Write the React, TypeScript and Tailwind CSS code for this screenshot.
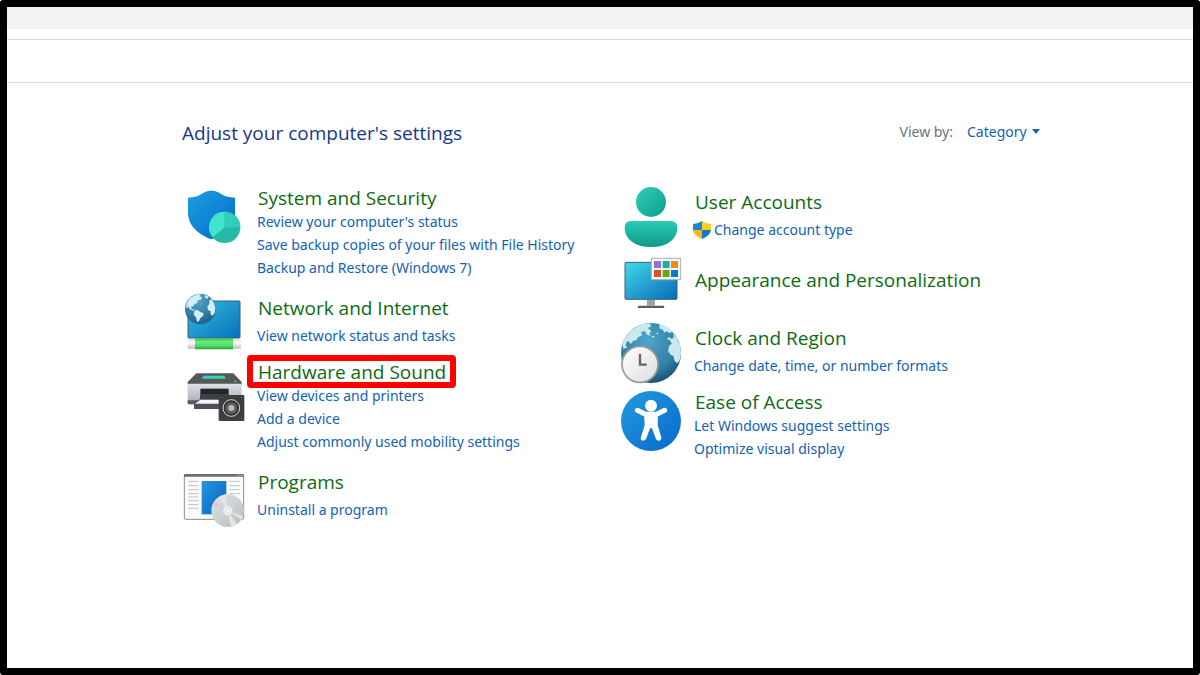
import React from 'react';

interface CategoryProps {
	title: string;
	links?: string[];
	icon: React.ReactNode;
	highlighted?: boolean;
	shielded?: boolean;
}

interface IconProps {
	viewBox: string;
	children: React.ReactNode;
}

const IconFrame: React.FC<IconProps> = ({ viewBox, children }) => (
	<svg className="h-14 w-16 shrink-0 overflow-visible" viewBox={viewBox} aria-hidden="true">
		{children}
	</svg>
);

const GlobeLand: React.FC = () => (
	<g fill="#d3eff6">
		<path d="M-40 -19 L-31 -32 L-19 -40 L-8 -44 L2 -44 L-3 -38 L5 -35 L1 -28 L-8 -26 L-9 -19 L-17 -15 L-22 -8 L-29 -6 L-25 0 L-18 2 L-21 5 L-32 0 L-37 -8 L-39 -2 L-43 -5 Z" />
		<path d="M-17 4 L-8 3 L0 9 L10 13 L8 21 L0 27 L-4 36 L-10 39 L-12 27 L-20 16 Z" />
		<path d="M13 -42 L25 -37 L22 -31 L15 -33 Z M27 -26 L34 -29 L41 -17 L45 -3 L43 11 L37 20 L30 15 L31 7 L23 3 L21 -8 L27 -15 Z" />
	</g>
);

const SecurityIcon: React.FC = () => (
	<IconFrame viewBox="21 18 192 168">
		<defs>
			<linearGradient id="shield" x1="0" y1="0" x2="1" y2="1">
				<stop offset="0" stopColor="#1aa0df" />
				<stop offset="1" stopColor="#0669cb" />
			</linearGradient>
		</defs>
		<path d="M39 53 Q66 53 84 39 Q109 24 134 39 Q151 53 180 53 V101 C180 140 145 164 109 178 C72 164 39 138 39 98 Z" fill="url(#shield)" />
		<circle cx="149" cy="142" r="47" fill="#25baa8" />
		<path d="M149 142 L113 172 A47 47 0 0 1 149 95 Z" fill="#40e5d0" />
		<path d="M149 142 V95 A47 47 0 0 1 196 142 Z" fill="#30cdbb" />
	</IconFrame>
);

const NetworkIcon: React.FC = () => (
	<IconFrame viewBox="21 24 192 168">
		<defs>
			<linearGradient id="netScreen" x1="0" y1="0" x2="1" y2="1">
				<stop offset="0" stopColor="#35bddc" />
				<stop offset="1" stopColor="#0870bd" />
			</linearGradient>
			<linearGradient id="cable" x1="0" y1="0" x2="0" y2="1">
				<stop offset="0" stopColor="#36ba4d" />
				<stop offset="0.3" stopColor="#67ed78" />
				<stop offset="0.7" stopColor="#51da63" />
				<stop offset="1" stopColor="#249b38" />
			</linearGradient>
			<linearGradient id="plug" x1="0" y1="0" x2="0" y2="1">
				<stop offset="0" stopColor="#dedede" />
				<stop offset="0.4" stopColor="#ffffff" />
				<stop offset="1" stopColor="#bcbcbc" />
			</linearGradient>
			<radialGradient id="netGlobe" cx="0.4" cy="0.2" r="0.8">
				<stop offset="0" stopColor="#5aa9ca" />
				<stop offset="1" stopColor="#1c638d" />
			</radialGradient>
		</defs>
		<rect x="39" y="48" width="156" height="111" rx="3" fill="url(#netScreen)" stroke="#386078" strokeWidth="3" />
		<rect x="38" y="162" width="160" height="29" rx="3" fill="url(#plug)" />
		<rect x="60" y="160" width="114" height="33" rx="2" fill="url(#cable)" />
		<circle cx="76" cy="72" r="46" fill="url(#netGlobe)" />
		<g transform="translate(76 72)">
			<GlobeLand />
		</g>
	</IconFrame>
);

const HardwareIcon: React.FC = () => (
	<IconFrame viewBox="21 30 192 168">
		<defs>
			<linearGradient id="printer" x1="0" y1="0" x2="0" y2="1">
				<stop offset="0" stopColor="#dde1e6" />
				<stop offset="1" stopColor="#a4aab3" />
			</linearGradient>
			<linearGradient id="tray" x1="0" y1="0" x2="1" y2="0">
				<stop offset="0" stopColor="#36c7e2" />
				<stop offset="1" stopColor="#3bd98d" />
			</linearGradient>
		</defs>
		<path d="M64 70 H175 L200 96 V105 H38 V96 Z" fill="#555759" />
		<path d="M86 77 H148 L153 86 H79 Z" fill="url(#tray)" />
		<circle cx="181" cy="94" r="3" fill="#48db38" />
		<path d="M38 101 H200 V158 Q200 163 195 163 H43 Q38 163 38 158 Z" fill="url(#printer)" />
		<path d="M38 151 H200 V158 Q200 163 195 163 H43 Q38 163 38 158 Z" fill="#555b62" />
		<path d="M76 116 H161 V150 H76 Z" fill="#24272a" />
		<path d="M76 132 H161 V150 H76 Z" fill="#3c4044" />
		<path d="M57 161 L75 147 H160 V177 H57 Z" fill="#4d5054" />
		<path d="M60 161 L76 149 H145 V161 Z" fill="#f4f5f7" />
		<rect x="131" y="135" width="77" height="78" rx="3" fill="#3c3d3e" />
		<circle cx="169" cy="174" r="25" fill="#303132" stroke="#d8d8d8" strokeWidth="3" />
		<circle cx="169" cy="174" r="18" fill="#5d5e60" />
		<circle cx="169" cy="174" r="9" fill="#b9bbbe" />
		<g fill="#6d6f71">
			<circle cx="139" cy="143" r="2" />
			<circle cx="200" cy="143" r="2" />
			<circle cx="139" cy="205" r="2" />
			<circle cx="200" cy="205" r="2" />
		</g>
	</IconFrame>
);

const ProgramsIcon: React.FC = () => (
	<IconFrame viewBox="21 6 192 168">
		<defs>
			<linearGradient id="document" x1="0" y1="0" x2="1" y2="1">
				<stop offset="0" stopColor="#2694df" />
				<stop offset="1" stopColor="#0865bf" />
			</linearGradient>
			<linearGradient id="disc" x1="0" y1="0" x2="1" y2="1">
				<stop offset="0" stopColor="#dfe3e5" />
				<stop offset="0.5" stopColor="#ccd2d4" />
				<stop offset="1" stopColor="#b4babc" />
			</linearGradient>
		</defs>
		<rect x="28" y="29" width="178" height="134" rx="4" fill="#fafafa" stroke="#8e8b87" strokeWidth="3" />
		<path d="M27 35 V31 Q27 27 31 27 H203 Q207 27 207 31 V35 Z" fill="#736e69" />
		<path d="M187 31 H190 M193 31 H196 M199 31 H202" stroke="#ffffff" strokeWidth="2" />
		<path d="M39 49 H70 M39 62 H70 M39 74 H70 M39 86 H70 M39 96 H70 M39 107 H70 M39 119 H70 M39 130 H70 M163 49 H195 M163 62 H195 M163 74 H195 M163 86 H195" stroke="#c3c3c3" strokeWidth="3" />
		<rect x="80" y="48" width="74" height="100" fill="url(#document)" />
		<circle cx="158" cy="137" r="49" fill="url(#disc)" />
		<path d="M158 137 L132 96 A49 49 0 0 1 153 88 Z M158 137 L186 177 A49 49 0 0 1 168 185 Z" fill="#e2e5e6" />
		<path d="M158 137 L112 121 A49 49 0 0 1 119 108 Z" fill="#dfc8df" />
		<path d="M158 137 L204 153 A49 49 0 0 1 199 164 Z" fill="#dce4dc" />
		<circle cx="158" cy="137" r="15" fill="#eceeee" stroke="#d1d5d6" strokeWidth="2" />
		<circle cx="158" cy="137" r="5" fill="#ffffff" stroke="#b5babb" strokeWidth="1" />
	</IconFrame>
);

const UserIcon: React.FC = () => (
	<IconFrame viewBox="21 21 192 168">
		<defs>
			<linearGradient id="user" x1="0" y1="0" x2="1" y2="1">
				<stop offset="0" stopColor="#2bd0ba" />
				<stop offset="1" stopColor="#119d8a" />
			</linearGradient>
			<linearGradient id="userBody" x1="0" y1="0" x2="0" y2="1">
				<stop offset="0" stopColor="#29ccb7" />
				<stop offset="1" stopColor="#129985" />
			</linearGradient>
		</defs>
		<circle cx="117" cy="66" r="45" fill="url(#user)" />
		<path d="M57 123 H177 Q196 124 196 143 C196 182 158 201 117 201 C76 201 38 182 38 143 Q38 124 57 123 Z" fill="url(#userBody)" />
	</IconFrame>
);

const AppearanceIcon: React.FC = () => (
	<IconFrame viewBox="21 12 192 168">
		<defs>
			<linearGradient id="monitor" x1="0" y1="0" x2="1" y2="1">
				<stop offset="0" stopColor="#42d9e5" />
				<stop offset="1" stopColor="#0869b8" />
			</linearGradient>
		</defs>
		<rect x="39" y="37" width="156" height="111" rx="3" fill="url(#monitor)" stroke="#38647c" strokeWidth="3" />
		<path d="M105 150 H129 V167 H105 Z" fill="#9ba1a7" />
		<path d="M80 167 H154 Q157 167 157 174 H77 Q77 167 80 167 Z" fill="#555c64" />
		<rect x="118" y="25" width="88" height="64" fill="#fafafa" stroke="#aaaeb3" strokeWidth="3" />
		<rect x="126" y="33" width="21" height="21" fill="#9971d5" />
		<rect x="152" y="33" width="21" height="21" fill="#20ae9e" />
		<rect x="177" y="33" width="21" height="21" fill="#ed8c10" />
		<rect x="126" y="60" width="21" height="21" fill="#db5320" />
		<rect x="152" y="60" width="21" height="21" fill="#5bae18" />
		<rect x="177" y="60" width="21" height="21" fill="#0877cf" />
	</IconFrame>
);

const ClockIcon: React.FC = () => (
	<IconFrame viewBox="21 24 192 168">
		<defs>
			<radialGradient id="clockGlobe" cx="0.45" cy="0.3" r="0.7">
				<stop offset="0" stopColor="#4da6c7" />
				<stop offset="0.7" stopColor="#327fa5" />
				<stop offset="1" stopColor="#1c5475" />
			</radialGradient>
			<linearGradient id="clockFace" x1="0" y1="0" x2="1" y2="1">
				<stop offset="0" stopColor="#ffffff" />
				<stop offset="1" stopColor="#dedede" />
			</linearGradient>
		</defs>
		<circle cx="117" cy="114" r="90" fill="url(#clockGlobe)" />
		<g fill="#c9e9f1">
			<path d="M31 87 L40 68 L55 49 L75 35 L93 27 L113 25 L118 34 L108 39 L118 49 L112 55 L116 62 L105 59 L98 48 L87 52 L91 61 L78 67 L74 75 L63 78 L57 87 L53 82 L45 78 L41 91 L46 98 L34 101 Z" />
			<path d="M142 29 L155 30 L173 40 L180 50 L174 55 L164 49 L157 53 L151 43 L143 41 Z" />
			<path d="M183 57 L193 67 L205 94 L207 116 L203 136 L196 145 L188 139 L184 122 L176 119 L168 108 L171 93 L179 86 L175 77 L164 70 L173 67 L178 72 L185 69 Z" />
			<path d="M121 62 L127 64 L125 68 L119 66 Z M133 53 L138 53 L139 57 L134 58 Z" />
		</g>
		<circle cx="84" cy="148" r="54" fill="url(#clockFace)" stroke="#969a9d" strokeWidth="5" />
		<path d="M84 117 V149 H104" fill="none" stroke="#606568" strokeWidth="7" />
	</IconFrame>
);

const AccessIcon: React.FC = () => (
	<IconFrame viewBox="21 15 192 168">
		<defs>
			<linearGradient id="access" x1="0" y1="0" x2="1" y2="1">
				<stop offset="0" stopColor="#229bdf" />
				<stop offset="1" stopColor="#0869cb" />
			</linearGradient>
		</defs>
		<circle cx="117" cy="108" r="90" fill="url(#access)" />
		<circle cx="117" cy="62" r="18" fill="#ffffff" />
		<path d="M76 76 L100 88 H134 L158 76" fill="none" stroke="#ffffff" strokeWidth="15" strokeLinecap="round" strokeLinejoin="round" />
		<path d="M96 82 H138 L137 121 L148 157 Q149 166 141 167 Q134 168 131 160 L120 130 H114 L103 160 Q100 168 92 167 Q84 164 87 156 L98 121 Z" fill="#ffffff" />
	</IconFrame>
);

const AdminShield: React.FC = () => (
	<svg className="-ml-px size-[18px] shrink-0" viewBox="0 0 18 18" aria-hidden="true">
		<path d="M9 0 Q5 3 0 3 V9 H9 Z" fill="#1c87cf" />
		<path d="M9 0 Q13 3 18 3 V9 H9 Z" fill="#f8cf20" />
		<path d="M0 9 Q1 15 9 18 V9 Z" fill="#f3b719" />
		<path d="M18 9 Q17 15 9 18 V9 Z" fill="#1877bd" />
	</svg>
);

const Category: React.FC<CategoryProps> = ({ title, links = [], icon, highlighted, shielded }) => {
	const single = links.length === 1;
	return (
		<section className={links.length > 1 ? 'flex gap-[11px] pb-1' : 'flex gap-[11px]'}>
			{icon}
			<div className={links.length > 1 ? '' : single ? 'py-[3px]' : 'pt-[14px] pb-[21px]'}>
				<h2 className="relative w-fit pl-px font-['Open_Sans','Noto_Sans',sans-serif] text-[19px] leading-6 text-[#0d6b13]">
					<a href="#">{title}</a>
					{highlighted && <span className="pointer-events-none absolute -inset-x-[10px] -top-[5px] -bottom-[4px] rounded-[4px] border-[6px] border-[#ff0000]" />}
				</h2>
				<ul className={single ? 'mt-1' : ''}>
					{links.map((link) => (
						<li key={link} className="h-[23px] text-[14px] leading-[23px] text-[#1263b3]">
							<a href="#" className="flex items-center gap-[3px]">
								{shielded && <AdminShield />}
								{link}
							</a>
						</li>
					))}
				</ul>
			</div>
		</section>
	);
};

const App: React.FC = () => {
	return (
		<div className="min-h-screen bg-white font-['Noto_Sans','Open_Sans',sans-serif]">
			<div className="flex min-h-screen flex-col rounded-[3px] border-[7px] border-black bg-white">
				<div className="h-[22px] bg-[#f2f2f2]" />
				<div className="mt-[10px] h-[44px] border-y border-[#d9d9d9]" />
				<main className="pr-[152px] pl-[175px]">
					<header className="flex items-start justify-between pt-[36px]">
						<h1 className="font-['Open_Sans','Noto_Sans',sans-serif] text-[19px] leading-7 text-[#15388a]">Adjust your computer's settings</h1>
						<div className="flex items-center pt-px text-[14px] leading-6">
							<label htmlFor="view" className="mr-[14px] text-[#68727d]">View by:</label>
							<div className="relative">
								<select id="view" className="block appearance-none bg-transparent pr-[14px] text-[#1263b3]">
									<option>Category</option>
								</select>
								<svg className="pointer-events-none absolute top-[9px] right-px h-[5px] w-[8px]" viewBox="0 0 8 5" aria-hidden="true">
									<path d="M0 0 H8 L4 5 Z" fill="#1263b3" />
								</svg>
							</div>
						</div>
					</header>
					<div className="mt-[39px] grid grid-cols-2 gap-[15px]">
						<div className="flex flex-col gap-[10px]">
							<Category
								title="System and Security"
								links={["Review your computer's status", 'Save backup copies of your files with File History', 'Backup and Restore (Windows 7)']}
								icon={<SecurityIcon />}
							/>
							<Category title="Network and Internet" links={['View network status and tasks']} icon={<NetworkIcon />} />
							<Category
								title="Hardware and Sound"
								links={['View devices and printers', 'Add a device', 'Adjust commonly used mobility settings']}
								icon={<HardwareIcon />}
								highlighted
							/>
							<Category title="Programs" links={['Uninstall a program']} icon={<ProgramsIcon />} />
						</div>
						<div className="flex flex-col gap-[10px] pt-px">
							<Category title="User Accounts" links={['Change account type']} icon={<UserIcon />} shielded />
							<Category title="Appearance and Personalization" icon={<AppearanceIcon />} />
							<Category title="Clock and Region" links={['Change date, time, or number formats']} icon={<ClockIcon />} />
							<Category title="Ease of Access" links={['Let Windows suggest settings', 'Optimize visual display']} icon={<AccessIcon />} />
						</div>
					</div>
				</main>
			</div>
		</div>
	);
};

export default App;
